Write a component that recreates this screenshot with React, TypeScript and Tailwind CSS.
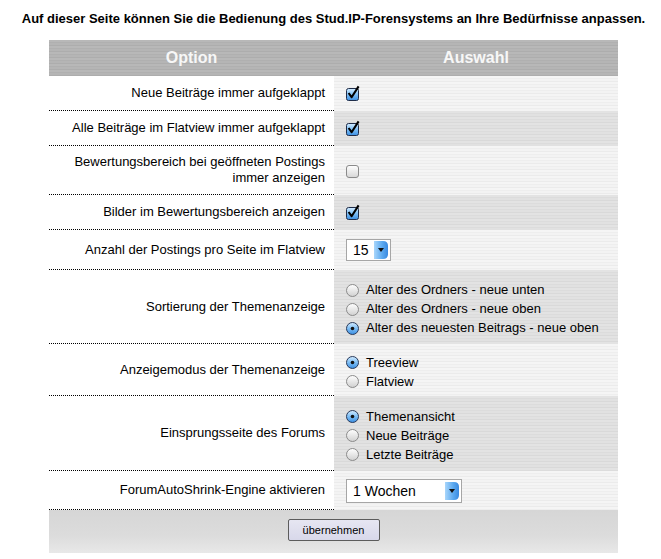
import React from "react";

const LIGHT =
  "bg-[repeating-linear-gradient(180deg,#f5f5f5_0px,#f5f5f5_2px,#eeeeee_2px,#eeeeee_3px,#f3f3f3_3px,#f3f3f3_5px,#ebebeb_5px,#ebebeb_6px)]";
const DARK =
  "bg-[repeating-linear-gradient(180deg,#e3e3e3_0px,#e3e3e3_2px,#dcdcdc_2px,#dcdcdc_3px,#e1e1e1_3px,#e1e1e1_5px,#d9d9d9_5px,#d9d9d9_6px)]";

function Checkbox({ checked }: { checked: boolean }) {
  if (!checked) {
    return (
      <svg width="14" height="15" viewBox="0 0 14 15" className="block">
        <defs>
          <linearGradient id="cbu" x1="0" y1="0" x2="0" y2="1">
            <stop offset="0" stopColor="#ffffff" />
            <stop offset="1" stopColor="#d6d6d6" />
          </linearGradient>
        </defs>
        <rect x="0.5" y="2.5" width="12" height="12" rx="2.5" fill="url(#cbu)" stroke="#8a8a8a" />
      </svg>
    );
  }
  return (
    <svg width="14" height="15" viewBox="0 0 14 15" className="block overflow-visible">
      <defs>
        <linearGradient id="cbc" x1="0" y1="0" x2="0" y2="1">
          <stop offset="0" stopColor="#d4ecff" />
          <stop offset="0.45" stopColor="#86c4f7" />
          <stop offset="1" stopColor="#3a8ee2" />
        </linearGradient>
      </defs>
      <rect x="0.5" y="2.5" width="12" height="12" rx="2" fill="url(#cbc)" stroke="#1f2c48" />
      <path d="M2.6 7 L5.6 11.2 L12.6 0.4" stroke="#000" strokeWidth="2.1" fill="none" strokeLinejoin="round" />
    </svg>
  );
}

function Radio({ checked }: { checked: boolean }) {
  return (
    <svg width="13" height="13" viewBox="0 0 13 13" className="block shrink-0">
      <defs>
        <linearGradient id="rdu" x1="0" y1="0" x2="0" y2="1">
          <stop offset="0" stopColor="#ffffff" />
          <stop offset="1" stopColor="#d0d0d0" />
        </linearGradient>
        <linearGradient id="rdc" x1="0" y1="0" x2="0" y2="1">
          <stop offset="0" stopColor="#d4ecff" />
          <stop offset="0.5" stopColor="#7dbef5" />
          <stop offset="1" stopColor="#3a8ee2" />
        </linearGradient>
      </defs>
      <circle
        cx="6.5"
        cy="6.5"
        r="6"
        fill={checked ? "url(#rdc)" : "url(#rdu)"}
        stroke={checked ? "#2a3a5a" : "#8a8a8a"}
      />
      {checked && <circle cx="6.5" cy="6.5" r="1.8" fill="#111" />}
    </svg>
  );
}

function SelectArrow() {
  return (
    <svg width="14" height="18" viewBox="0 0 14 18" className="block">
      <defs>
        <linearGradient id="sa" x1="0" y1="0" x2="1" y2="0">
          <stop offset="0" stopColor="#a9d6fb" />
          <stop offset="0.6" stopColor="#5aa8ef" />
          <stop offset="1" stopColor="#3a8ae0" />
        </linearGradient>
      </defs>
      <path d="M0 0 H9 Q14 0 14 5 V13 Q14 18 9 18 H0 Z" fill="url(#sa)" />
      <path d="M4 7 H10 L7 11 Z" fill="#111" />
    </svg>
  );
}

function Select({ value, width, height }: { value: string; width: string; height: string }) {
  return (
    <div className={`flex items-center justify-between border border-[#a6a6a6] bg-white pl-[6px] pr-[2px] ${width} ${height}`}>
      <span className="text-[14px] leading-[16px] text-black">{value}</span>
      <SelectArrow />
    </div>
  );
}

function RadioGroup({ items, sel }: { items: string[]; sel: number }) {
  return (
    <div className="flex flex-col pt-[4px]">
      {items.map((t, i) => (
        <div key={t} className="flex h-[19px] items-center gap-[7px]">
          <Radio checked={i === sel} />
          <span className="leading-[16px]">{t}</span>
        </div>
      ))}
    </div>
  );
}

type Row = { label: React.ReactNode; h: string; content: React.ReactNode };

export default function App() {
  const rows: Row[] = [
    { label: "Neue Beiträge immer aufgeklappt", h: "h-[35px]", content: <Checkbox checked /> },
    { label: "Alle Beiträge im Flatview immer aufgeklappt", h: "h-[35px]", content: <Checkbox checked /> },
    {
      label: (
        <>
          Bewertungsbereich bei geöffneten Postings
          <br />
          immer anzeigen
        </>
      ),
      h: "h-[49px]",
      content: <Checkbox checked={false} />,
    },
    { label: "Bilder im Bewertungsbereich anzeigen", h: "h-[35px]", content: <Checkbox checked /> },
    {
      label: "Anzahl der Postings pro Seite im Flatview",
      h: "h-[40px]",
      content: <Select value="15" width="w-[45px]" height="h-[22px]" />,
    },
    {
      label: "Sortierung der Themenanzeige",
      h: "h-[74px]",
      content: (
        <RadioGroup
          sel={2}
          items={[
            "Alter des Ordners - neue unten",
            "Alter des Ordners - neue oben",
            "Alter des neuesten Beitrags - neue oben",
          ]}
        />
      ),
    },
    {
      label: "Anzeigemodus der Themenanzeige",
      h: "h-[52px]",
      content: <RadioGroup sel={0} items={["Treeview", "Flatview"]} />,
    },
    {
      label: "Einsprungsseite des Forums",
      h: "h-[75px]",
      content: <RadioGroup sel={0} items={["Themenansicht", "Neue Beiträge", "Letzte Beiträge"]} />,
    },
    {
      label: "ForumAutoShrink-Engine aktivieren",
      h: "h-[39px]",
      content: <Select value="1 Wochen" width="w-[116px]" height="h-[24px]" />,
    },
  ];

  return (
    <div className="h-[559px] w-[661px] bg-white font-['Liberation_Sans',Arial,sans-serif] text-[13px] text-black">
      <div className="h-[40px] pl-[6px] pt-[11px] text-center font-bold leading-[16px]">
        Auf dieser Seite können Sie die Bedienung des Stud.IP-Forensystems an Ihre Bedürfnisse anpassen.
      </div>
      <div className="ml-[49px] w-[569px]">
        <div className="flex h-[36px] items-center bg-[repeating-linear-gradient(180deg,#b8b8b8_0px,#b8b8b8_2px,#b0b0b0_2px,#b0b0b0_3px,#b5b5b5_3px,#b5b5b5_5px,#adadad_5px,#adadad_6px)] text-[16px] font-bold text-[#f7f7f7]">
          <div className="w-[285px] text-center">Option</div>
          <div className="flex-1 text-center">Auswahl</div>
        </div>
        {rows.map((r, i) => (
          <div key={i} className={`flex ${r.h}`}>
            <div className="flex w-[285px] items-center justify-end border-b border-dotted border-black pr-[9px] text-right leading-[16px]">
              <div>{r.label}</div>
            </div>
            <div className={`flex flex-1 items-center pl-[12px] ${i % 2 === 0 ? LIGHT : DARK}`}>{r.content}</div>
          </div>
        ))}
        <div className="flex h-[43px] items-center justify-center pb-[3px] bg-[linear-gradient(180deg,#d6d6d6_0%,#dcdcdc_60%,#e8e8e8_100%)]">
          <button className="h-[22px] w-[92px] rounded-[2px] border border-[#5c5c5c] bg-[linear-gradient(180deg,#e6e6f2,#d8d8ea)] text-[11px] leading-[14px] text-black">
            übernehmen
          </button>
        </div>
      </div>
    </div>
  );
}
